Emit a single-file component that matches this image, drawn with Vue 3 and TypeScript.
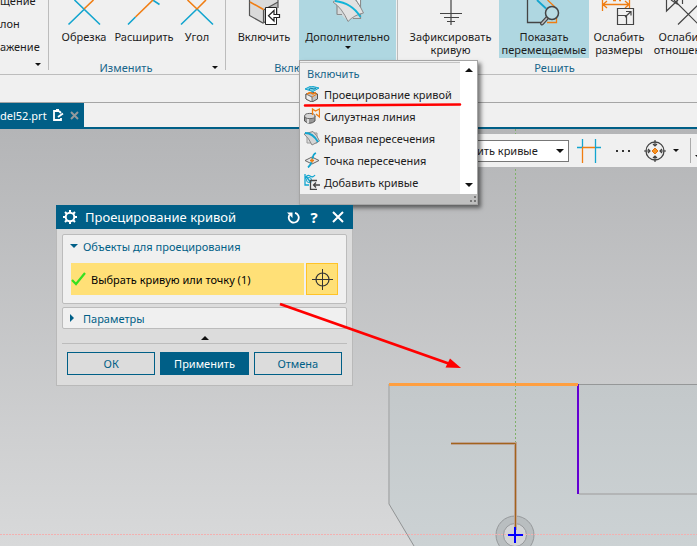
<script setup lang="ts">
import { ref } from 'vue'

type IconName =
  | 'trim' | 'extend' | 'corner' | 'include' | 'more'
  | 'fix' | 'show' | 'relax' | 'relations'

interface Tool {
  icon: IconName
  lines: string[]
  size: string
  active?: boolean
  caret?: boolean
}

interface Group {
  title: string
  size: string
  launcher: boolean
  tools: Tool[]
}

const sideItems: string[] = ['щение', 'лон', 'ажение']

const groups: Group[] = [
  {
    title: 'Изменить',
    size: 'edit',
    launcher: true,
    tools: [
      { icon: 'trim', lines: ['Обрезка'], size: 'w60' },
      { icon: 'extend', lines: ['Расширить'], size: 'w60' },
      { icon: 'corner', lines: ['Угол'], size: 'w46' },
    ],
  },
  {
    title: 'Включить',
    size: 'insert',
    launcher: true,
    tools: [
      { icon: 'include', lines: ['Включить'], size: 'w70' },
      { icon: 'more', lines: ['Дополнительно'], size: 'w97', active: true, caret: true },
    ],
  },
  {
    title: 'Решить',
    size: 'solve',
    launcher: false,
    tools: [
      { icon: 'fix', lines: ['Зафиксировать', 'кривую'], size: 'w97' },
      { icon: 'show', lines: ['Показать', 'перемещаемые'], size: 'w90', active: true },
      { icon: 'relax', lines: ['Ослабить', 'размеры'], size: 'w60' },
      { icon: 'relations', lines: ['Ослабить', 'отношения'], size: 'w70' },
    ],
  },
]

const menuItems: { id: string; label: string }[] = [
  { id: 'project', label: 'Проецирование кривой' },
  { id: 'silhouette', label: 'Силуэтная линия' },
  { id: 'curve', label: 'Кривая пересечения' },
  { id: 'point', label: 'Точка пересечения' },
  { id: 'add', label: 'Добавить кривые' },
]

const selectionMode = ref('curves')
const objectsOpen = ref(true)
const paramsOpen = ref(false)
</script>

<template>
  <div class="app">
    <header class="ribbon">
      <div class="side">
        <div class="side-list">
          <button v-for="item in sideItems" :key="item" type="button" class="side-item">{{ item }}</button>
        </div>
        <button type="button" class="launcher" aria-label="Ещё"><i class="caret"></i></button>
      </div>

      <section v-for="group in groups" :key="group.title" class="group" :class="group.size">
        <div class="tools">
          <button
            v-for="tool in group.tools"
            :key="tool.icon"
            type="button"
            class="tool"
            :class="[tool.size, { active: tool.active, dropping: tool.caret }]"
          >
            <svg class="tool-icon" width="40" height="28" viewBox="0 0 40 28" fill="none" aria-hidden="true">
              <g v-if="tool.icon === 'trim'" stroke-width="1.6">
                <path d="M10.500 0L36 24.500M20 9.500L4.500 24.500" stroke="#12a5cf" />
                <path d="M20 9L29.500 0" stroke="#f07d12" />
              </g>
              <g v-else-if="tool.icon === 'extend'" stroke-width="1.600">
                <path d="M4 24.500L11.500 17M28 -.5L35.500 4.500" stroke="#12a5cf" />
                <path d="M11.500 17L29 0" stroke="#f07d12" />
              </g>
              <g v-else-if="tool.icon === 'corner'" stroke-width="1.600">
                <path d="M20 9L4 24.500M20 9L36 24.500" stroke="#12a5cf" />
                <path d="M10.500 0L20 9L29 0" stroke="#f07d12" />
              </g>
              <g v-else-if="tool.icon === 'include'">
                <path d="M5.500 0H34V15L19 23L5.500 15.500Z" fill="#dadada" />
                <path d="M19.500 10L34 2V15L19 23Z" fill="#bcbcbc" />
                <path d="M5.500 0V15.500L19 23L22 21.500M19.500 10V22M34 0V8M19.500 10L34 2" stroke="#555" stroke-width="1.200" />
                <path d="M6 2L19.500 9.500" stroke="#f07d12" stroke-width="1.500" />
                <path d="M21.500 7.500H32.500V24.500H21.500Z" fill="#fff" stroke="#222" />
                <path d="M35.500 14.500H30V10.500L24.500 15.800L30 21V17.500H35.500Z" fill="#fff" stroke="#222" stroke-width="1.200" />
              </g>
              <g v-else-if="tool.icon === 'more'">
                <path d="M9 -1H32.500V18.500H9Z" fill="#d6d9da" />
                <path d="M9 14.500H9V0M9 14.500H14M32.500 0V18.500H25" stroke="#8c8c8c" stroke-width="1.200" />
                <path d="M8 15.200V20H18L14 15.200ZM24 19.200H34V22H24Z" fill="#afd7e1" />
                <path d="M5 2Q14 8 20 21.500Q26 15 35.500 13Q32 5 27 -1H10Z" fill="#e2e2e2" stroke="#8c8c8c" />
                <path d="M28 0L32.500 7V0" fill="#f3f3f3" stroke="#8c8c8c" />
                <path d="M7 1Q24 3 32.500 17" stroke="#12b4d8" stroke-width="1.800" />
              </g>
              <g v-else-if="tool.icon === 'fix'" stroke="#444" stroke-width="1.200">
                <path d="M20 0V25M9 13.500H31M13 17.500H28M16 21.500H24" />
              </g>
              <g v-else-if="tool.icon === 'show'" stroke-width="1.300">
                <path d="M3.500 0V22.500H17" stroke="#444" />
                <path d="M23 22.500H32.500V18M23.500 0L31 7" stroke="#f07d12" />
                <path d="M13 0L22 8.500" stroke="#12a5cf" stroke-width="1.800" />
                <path d="M23.500 17.500L18 23.500" stroke="#444" stroke-width="4" stroke-linecap="round" />
                <path d="M23.500 17.500L18 23.500" stroke="#bbb" stroke-width="1.600" stroke-linecap="round" />
                <circle cx="28" cy="13" r="6.500" fill="#b9dce3" stroke="#444" stroke-width="1.500" />
              </g>
              <g v-else-if="tool.icon === 'relax'">
                <path d="M3.500 0V11M30.500 0V9M4 4.500H30M8 1L4 4.500L8 8M26 1L30 4.500L26 8M14 .5H17M20 .5H22" stroke="#f07d12" stroke-width="1.300" />
                <path d="M18.500 8.500H34.500V24.500H18.500ZM18.500 15.500H27.500V24.500M26 17L32 11.500M27 11.500H32V15.500" stroke="#444" stroke-width="1.200" />
              </g>
              <g v-else stroke="#444" stroke-width="1.200">
                <path d="M2.500 0V11L14 0M7 0L13 4V0M18.500 0V4M10 0L34 24M14 24.500L36 3" />
              </g>
            </svg>
            <span v-for="line in tool.lines" :key="line" class="tool-line">{{ line }}</span>
            <i v-if="tool.caret" class="caret small"></i>
          </button>
        </div>
        <div class="group-foot">
          <h2 class="group-title">{{ group.title }}</h2>
          <button v-if="group.launcher" type="button" class="launcher" :aria-label="group.title"><i class="caret"></i></button>
        </div>
      </section>
    </header>

    <div class="strip"></div>

    <nav class="tabs">
      <div class="tab">
        <a href="#model" class="tab-link">del52.prt</a>
        <svg width="11" height="12" viewBox="0 0 11 12" fill="none" aria-hidden="true">
          <path d="M6 2H1V11H8V9M6 2L8 4M3 1H6" stroke="#fff" stroke-width="1.800" />
          <path d="M5 8L10 4.500" stroke="#fff" stroke-width="1.800" />
        </svg>
        <button type="button" class="tab-close" aria-label="Закрыть">
          <svg width="9" height="9" viewBox="0 0 9 9"><path d="M1 1L8 8M8 1L1 8" stroke="#93999c" stroke-width="2" /></svg>
        </button>
      </div>
    </nav>

    <main class="viewport">
      <svg class="model" width="100%" height="100%" aria-hidden="true">
        <defs>
          <linearGradient id="face" gradientUnits="userSpaceOnUse" x1="0" y1="384" x2="0" y2="546">
            <stop offset="0" stop-color="#c3c8ca" />
            <stop offset="1" stop-color="#ccd2d4" />
          </linearGradient>
        </defs>
        <g transform="translate(0 -129)" fill="none">
          <path d="M389 384H4000V2000H1250L389 504Z" fill="url(#face)" />
          <path d="M389 384V504" stroke="#b3b5b6" stroke-width="2" />
          <path d="M389 504L1250 1950" stroke="#929495" />
          <path d="M578 384.500H4000" stroke="#959798" />
          <path d="M579 494H4000" stroke="#b3b5b6" stroke-width="2" />
          <circle cx="515" cy="535" r="15" stroke="#b9bec0" stroke-width="8" />
          <circle cx="515" cy="535" r="19" stroke="#96999b" />
          <circle cx="515" cy="535" r="11.500" fill="#d2d4d6" stroke="#96999b" />
          <path d="M515.500 129V443" stroke="#7fb069" stroke-dasharray="2 2" />
          <path d="M0 534.500H4000" stroke="#f3b0b0" stroke-dasharray="2 1" />
          <path d="M451 443.500H515.500V530" stroke="#bca293" stroke-width="3" />
          <path d="M451 443.500H515.500V530" stroke="#a2641c" />
          <path d="M578 384V494" stroke="#6400d2" stroke-width="2" />
          <path d="M389 384.500H578" stroke="#ff9f40" stroke-width="3" />
          <path d="M508 535H523M515 527V543" stroke="#0000ff" stroke-width="2" />
        </g>
      </svg>

      <div class="selection-bar">
        <div class="combo">
          <select v-model="selectionMode" aria-label="Правило выбора">
            <option value="curves">ить кривые</option>
          </select>
          <i class="caret big"></i>
        </div>
        <button type="button" class="bar-button" aria-label="Пересечение">
          <svg width="24" height="26" viewBox="0 0 24 26" fill="none" aria-hidden="true">
            <path d="M0 9.500H5M19 9.500H24M5.500 1V9M18.500 1V25" stroke="#12a5cf" stroke-width="1.300" />
            <path d="M5 9.500H18M5.500 10V25" stroke="#f07d12" stroke-width="1.300" />
          </svg>
        </button>
        <button type="button" class="bar-button dots" aria-label="Ещё">
          <svg width="15" height="3" viewBox="0 0 15 3" fill="#333" aria-hidden="true"><path d="M0 1H2V3H0ZM6 1H8V3H6ZM12 1H14V3H12Z" /></svg>
        </button>
        <button type="button" class="bar-button snap" aria-label="Привязка">
          <svg width="24" height="24" viewBox="0 0 24 24" fill="none" aria-hidden="true">
            <circle cx="12" cy="12" r="9" stroke="#444" stroke-width="1.300" />
            <path d="M12 1V7M12 23V17M1 12H7M23 12H17M10 5L12 7L14 5M10 19L12 17L14 19M5 10L7 12L5 14M19 10L17 12L19 14" stroke="#444" stroke-width="1.200" />
            <path d="M12 9L15 12L12 15L9 12Z" fill="#f7931e" stroke="#e0700f" />
          </svg>
          <i class="caret"></i>
        </button>
        <button type="button" class="bar-button more" aria-label="Параметры панели"><i class="caret"></i></button>
      </div>
    </main>

    <div class="menu">
      <div class="menu-body">
        <div class="menu-list">
          <h3 class="menu-title">Включить</h3>
          <button v-for="item in menuItems" :key="item.id" type="button" class="menu-item">
            <svg width="16" height="16" viewBox="0 0 16 16" fill="none" aria-hidden="true">
              <g v-if="item.id === 'project'">
                <path d="M2 8L8 6L13.500 8V13L8 16L2 13Z" fill="#c2c2c2" stroke="#555" />
                <path d="M2 8L8 11V16L2 13Z" fill="#eee" stroke="#555" stroke-width=".8" />
                <path d="M3 8L6 6.500L9 8L12 6.500" stroke="#f07d12" stroke-width="1.500" />
                <path d="M8 11L13 8" stroke="#f07d12" />
                <path d="M1 3L7 0L15 2L9 5.500Z" fill="#7fd0e4" stroke="#12a5cf" />
                <path d="M5 4Q6 1 8 2.500T12 2" stroke="#087da0" />
              </g>
              <g v-else-if="item.id === 'silhouette'">
                <path d="M.5 8V13Q6 17.500 11 13V8" fill="#999" stroke="#555" />
                <path d="M4 9V15" stroke="#ddd" stroke-width="2" />
                <ellipse cx="5.800" cy="8" rx="5.200" ry="2.600" fill="#d5d5d5" stroke="#666" />
                <path d="M8.500 7V1L11.500 3L15.500 1V9L12 6" stroke="#f07d12" stroke-width="1.300" />
              </g>
              <g v-else-if="item.id === 'curve'">
                <path d="M3 3H13V13H3Z" fill="#ddd" stroke="#999" />
                <path d="M0 4Q5 8 8 15L15.500 11Q13 5 9 1.500Z" fill="#d5d5d5" stroke="#888" />
                <path d="M1 3Q9 3 14 12" stroke="#12a5cf" stroke-width="1.800" />
              </g>
              <g v-else-if="item.id === 'point'">
                <path d="M1 8.500L8 5L15 8.500L8 12Z" fill="#e5e5e5" stroke="#666" />
                <path d="M12 1Q9 2 8.500 7M7.500 10Q7 13 4 15.500" stroke="#12a5cf" stroke-width="1.800" />
                <path d="M8 6.500V10.500M6 8.500H10" stroke="#f07d12" stroke-width="1.600" />
              </g>
              <g v-else>
                <path d="M1 0V11H5M1 5Q3 0 6 2T11 1M2 2L7 9" stroke="#12a5cf" stroke-width="1.300" />
                <circle cx="5" cy="6" r="2.500" stroke="#12a5cf" />
                <path d="M13 6.500H6.500V15.500H13M16 11H10M12 8.500L9.500 11L12 13.500" stroke="#444" stroke-width="1.300" />
              </g>
            </svg>
            <span>{{ item.label }}</span>
          </button>
        </div>
        <div class="menu-scroll">
          <button type="button" aria-label="Вверх"><i class="caret big up"></i></button>
          <button type="button" aria-label="Вниз"><i class="caret big"></i></button>
        </div>
      </div>
      <div class="menu-grip">
        <svg width="8" height="8" viewBox="0 0 8 8" fill="#777" aria-hidden="true"><path d="M5 0H7V2H5ZM1 4H3V6H1ZM5 4H7V6H5Z" /></svg>
      </div>
    </div>

    <section class="dialog" role="dialog" aria-labelledby="dialog-title">
      <header class="dialog-head">
        <svg width="14" height="14" viewBox="0 0 14 14" fill="none" stroke="#fff" aria-hidden="true">
          <circle cx="7" cy="7" r="4.300" stroke-width="2" />
          <path d="M7 0V2.500M7 11.500V14M0 7H2.500M11.500 7H14M2 2L4 4M10 10L12 12M12 2L10 4M4 10L2 12" stroke-width="2" />
        </svg>
        <h1 id="dialog-title">Проецирование кривой</h1>
        <button type="button" aria-label="Сброс">
          <svg width="13" height="13" viewBox="0 0 13 13" fill="none" aria-hidden="true">
            <path d="M8 1.800A5 5 0 1 1 2.500 4" stroke="#fff" stroke-width="1.800" />
            <path d="M0 1.500H5.500V7Z" fill="#fff" />
          </svg>
        </button>
        <button type="button" class="help" aria-label="Справка">?</button>
        <button type="button" aria-label="Закрыть">
          <svg width="12" height="12" viewBox="0 0 12 12" aria-hidden="true"><path d="M1 1L11 11M11 1L1 11" stroke="#fff" stroke-width="2" /></svg>
        </button>
      </header>

      <div class="dialog-body">
        <div class="panel">
          <button type="button" class="panel-head" :aria-expanded="objectsOpen" @click="objectsOpen = !objectsOpen">
            <i class="mark" :class="{ open: objectsOpen }"></i><span>Объекты для проецирования</span>
          </button>
          <div v-if="objectsOpen" class="pick-row">
            <button type="button" class="pick">
              <svg width="15" height="14" viewBox="0 0 15 14" fill="none" aria-hidden="true"><path d="M1 8L5 12L14 1" stroke="#35e020" stroke-width="2.200" /></svg>
              <span>Выбрать кривую или точку (1)</span>
            </button>
            <button type="button" class="target" aria-label="Выбрать точку">
              <svg width="21" height="21" viewBox="0 0 21 21" fill="none" stroke="#333" aria-hidden="true">
                <circle cx="10.500" cy="10.500" r="6.500" stroke-width="1.200" /><path d="M10.500 0V21M0 10.500H21" />
              </svg>
            </button>
          </div>
        </div>

        <div class="panel">
          <button type="button" class="panel-head low" :aria-expanded="paramsOpen" @click="paramsOpen = !paramsOpen">
            <i class="mark" :class="{ open: paramsOpen }"></i><span>Параметры</span>
          </button>
        </div>

        <button type="button" class="collapse" aria-label="Свернуть"><i class="caret big up"></i></button>

        <footer class="actions">
          <button type="button">ОК</button>
          <button type="button" class="primary">Применить</button>
          <button type="button">Отмена</button>
        </footer>
      </div>
    </section>

    <svg class="annotations" width="100%" height="100%" fill="none" aria-hidden="true">
      <path d="M305 105.500L460 104.500" stroke="#f00" stroke-width="2.600" stroke-linecap="round" />
      <path d="M280 304L450 364" stroke="#f00" stroke-width="2.800" />
      <path d="M461 368L445.500 367.500L450 358.500Z" fill="#f00" />
    </svg>
  </div>
</template>

<style>
body {
  margin: 0;
}
</style>

<style scoped>
.app {
  position: relative;
  display: flex;
  flex-direction: column;
  height: 100vh;
  overflow: hidden;
  background: #f0f0f0;
  color: #1c1c1c;
  font-family: "Noto Sans", "Open Sans", sans-serif;
  font-size: 11px;
  line-height: 13px;
}

button {
  padding: 0;
  border: 0;
  background: none;
  color: inherit;
  font: inherit;
  cursor: pointer;
}

svg {
  flex: none;
  display: block;
}

h1,
h2,
h3 {
  margin: 0;
  font-weight: 400;
}

.caret {
  flex: none;
  width: 0;
  height: 0;
  border: 3px solid transparent;
  border-top-color: #111;
  border-bottom-width: 0;
}

.caret.big {
  border-width: 4px 4px 0;
}

.caret.up {
  border-width: 0 4px 4px;
  border-bottom-color: #111;
}

.ribbon {
  display: flex;
  height: 74px;
  border-bottom: 1px solid #bdbdbd;
  overflow: hidden;
}

.side,
.group {
  position: relative;
  flex: none;
  box-sizing: border-box;
  display: flex;
}

.side::after,
.group:not(.solve)::after {
  content: "";
  width: 1px;
  height: 70px;
  position: absolute;
  right: 0;
  top: 0;
  background: #bcbcbc;
}

.side {
  width: 49px;
  justify-content: space-between;
  align-items: flex-end;
}

.side-list {
  align-self: flex-start;
  flex: 1;
  min-width: 0;
  display: flex;
  flex-direction: column;
  align-items: flex-start;
  gap: 10px;
  margin-top: -6px;
}

.side-item {
  white-space: nowrap;
}

.launcher {
  flex: none;
  width: 23px;
  height: 20px;
  display: flex;
  align-items: center;
  justify-content: center;
}

.group {
  flex-direction: column;
}

.edit {
  width: 177px;
}

.insert {
  width: 172px;
}

.solve {
  flex: 1;
  min-width: 0;
}

.tools {
  flex: 1;
  display: flex;
  align-items: flex-start;
}

.edit .tools {
  padding-left: 5px;
}

.insert .tools {
  padding-left: 3px;
}

.solve .tools {
  padding-left: 4px;
}

.tool {
  flex: none;
  display: flex;
  flex-direction: column;
  align-items: center;
  height: 58px;
  white-space: nowrap;
}

.tool.active {
  background: #afd7e1;
}

.tool.dropping {
  height: 60px;
}

.tool-icon {
  margin-bottom: 2px;
}

.tool .caret {
  margin-top: 3px;
}

.w46 {
  width: 46px;
}

.w60 {
  width: 60px;
}

.w70 {
  width: 70px;
}

.w90 {
  width: 90px;
}

.w97 {
  width: 97px;
}

.group-foot {
  display: flex;
  height: 14px;
  align-items: center;
}

.solve .group-foot {
  padding-left: 14px;
}

.group-title {
  flex: 1;
  text-align: center;
  font-size: 11px;
  color: #17658a;
}

.strip {
  height: 27px;
  border-bottom: 1px solid #a5a5a5;
}

.tabs {
  display: flex;
  height: 24px;
  border-bottom: 2px solid #005f87;
}

.tab {
  display: flex;
  align-items: center;
  gap: 6px;
  padding-right: 5px;
  background: #005f87;
  color: #fff;
}

.tab-link {
  color: inherit;
  text-decoration: none;
}

.viewport {
  position: relative;
  flex: 1;
  min-height: 0;
  background: linear-gradient(#b4b5b7, #d8d9da);
}

.model {
  position: absolute;
  inset: 0;
}

.selection-bar {
  position: relative;
  display: flex;
  align-items: center;
  height: 33px;
  margin-top: 5px;
  margin-left: 450px;
  background: #f0f0f0;
}

.combo {
  flex: none;
  display: flex;
  align-items: center;
  width: 119px;
  margin-right: 8px;
  box-sizing: border-box;
  height: 22px;
  border: 1px solid #777;
  background: #fff;
}

.combo select {
  appearance: none;
  flex: 1;
  min-width: 0;
  padding: 0 0 0 26px;
  border: 0;
  background: none;
  color: inherit;
  font: inherit;
}

.combo .caret {
  margin-right: 4px;
}

.bar-button {
  flex: none;
  display: flex;
  align-items: center;
  gap: 6px;
}

.dots {
  margin: 0 12px 0 15px;
}

.more {
  flex: 1 0 auto;
  align-self: stretch;
  margin: 4px 0 4px 11px;
  padding: 12px 0 0 4px;
  border-left: 1px solid #aaa;
}

.menu {
  position: absolute;
  left: 299px;
  top: 60px;
  width: 179px;
  box-sizing: border-box;
  border: 1px solid #a5a5a5;
  background: #f0f0f0;
  box-shadow: 3px 3px 4px rgba(0, 0, 0, 0.5);
}

.menu-body {
  display: flex;
  height: 133px;
}

.menu-list {
  flex: 1;
  min-width: 0;
  display: flex;
  flex-direction: column;
}

.menu-title {
  margin: 1px 0 0;
  padding: 3px 0 1px 7px;
  border-top: 1px solid #c4c4c4;
  font-size: 11px;
  line-height: 16px;
  color: #17658a;
}

.menu-item {
  display: flex;
  align-items: center;
  gap: 4px;
  height: 22px;
  padding-left: 4px;
  white-space: nowrap;
}

.menu-scroll {
  flex: none;
  width: 17px;
  display: flex;
  flex-direction: column;
  justify-content: space-between;
  background: #fff;
}

.menu-scroll button {
  display: flex;
  align-items: center;
  justify-content: center;
  height: 18px;
}

.menu-grip {
  display: flex;
  justify-content: flex-end;
  align-items: flex-end;
  height: 10px;
  background: #bfbfbf;
}

.dialog {
  position: absolute;
  left: 56px;
  top: 205px;
  width: 297px;
  box-sizing: border-box;
  border: 1px solid #b9b9b9;
  border-top: 0;
  background: #dcdcdc;
}

.dialog-head {
  display: flex;
  align-items: center;
  gap: 8px;
  height: 24px;
  margin: 0 -1px;
  padding: 0 9px 0 7px;
  background: #005f87;
  color: #fff;
}

.dialog-head h1 {
  flex: 1;
  font-size: 13px;
  line-height: 20px;
}

.dialog-head .help {
  width: 12px;
  font-size: 15px;
  font-weight: 700;
}

.dialog-head button:last-child {
  margin-left: 4px;
}

.dialog-body {
  padding: 5px 5px 10px;
}

.panel {
  border: 1px solid #bcbcbc;
  border-radius: 2px;
  background: #f0f0f0;
  margin-bottom: 3px;
}

.panel-head {
  display: flex;
  align-items: center;
  width: 100%;
  height: 22px;
  padding-left: 7px;
  color: #005f87;
  text-align: left;
}

.panel-head.low {
  height: 20px;
}

.mark {
  width: 0;
  height: 0;
  margin-right: 9px;
  border-style: solid;
  border-width: 4px 0 4px 4px;
  border-color: transparent transparent transparent #005f87;
}

.mark.open {
  margin-right: 5px;
  border-width: 4px 4px 0;
  border-color: #005f87 transparent transparent;
}

.pick-row {
  display: flex;
  gap: 2px;
  height: 32px;
  padding: 6px 8px 8px;
}

.pick {
  flex: 1;
  display: flex;
  align-items: center;
  gap: 5px;
  background: #ffe077;
  color: #000;
  white-space: nowrap;
}

.target {
  width: 32px;
  display: flex;
  align-items: center;
  justify-content: center;
  border: 1px solid #ffc328;
  background: #ffe077;
}

.collapse {
  display: flex;
  align-items: center;
  justify-content: center;
  width: 100%;
  height: 12px;
  border-bottom: 1px solid #bcbcbc;
}

.actions {
  display: flex;
  gap: 5px;
  padding: 8px 5px 0;
}

.actions button {
  flex: 1;
  height: 23px;
  border: 1px solid #005f87;
  color: #005f87;
}

.actions .primary {
  background: #005f87;
  color: #fff;
}

.annotations {
  position: absolute;
  inset: 0;
  pointer-events: none;
}
</style>
